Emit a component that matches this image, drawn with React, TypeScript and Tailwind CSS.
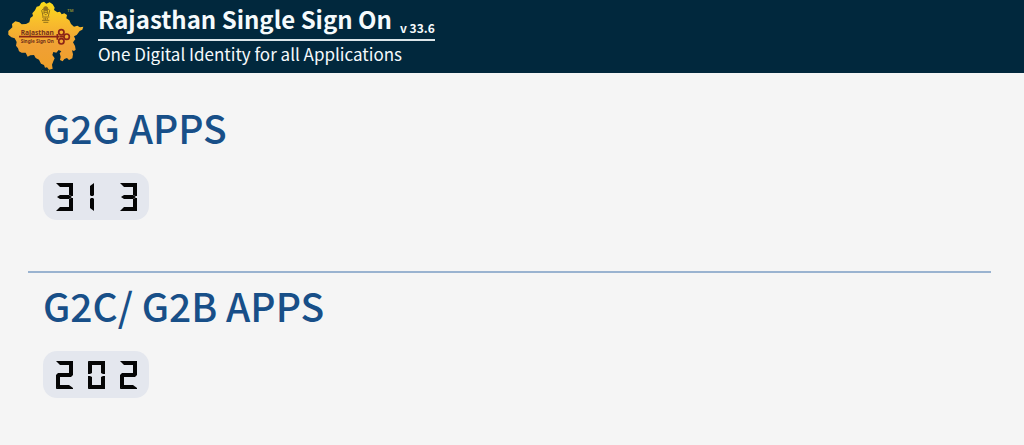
import React from "react";

const SEGMENTS: Record<string, string> = {
	a: "0,0 17,0 17,1 13,4 4,4",
	b: "17,0 17,13 15,13 13,12 13,3",
	c: "13,16 15,15 17,15 17,28 13,25",
	d: "4,24 13,24 17,27 17,28 0,28",
	e: "0,15 2,15 4,16 4,25 0,28",
	f: "0,0 4,3 4,12 2,13 0,13",
	g: "1,14 4,12 13,12 16,14 13,16 4,16",
	h: "2,3 6,0 6,12 5,13 3,13 2,12",
	i: "3,15 5,15 6,16 6,28 2,25 2,16",
	j: "13,11 17,11 17,14 15,16 13,16",
	k: "0,17 0,14 2,12 4,12 4,17",
};

const DIGITS: Record<string, string> = {
	"0": "abcdef",
	"1": "hi",
	"2": "abgedjk",
	"3": "abgcd",
};

const Counter = ({ value }: { value: string }) => (
	<div
		className="flex h-[47px] w-fit items-center gap-[15px] rounded-[14px] bg-[#e4e7ee] pl-[13px] pr-3"
		role="img"
		aria-label={value}
	>
		{value.split("").map((digit, i) => (
			<svg
				key={i}
				className="h-7 w-[17px]"
				viewBox="0 0 17 28"
				fill="#050505"
				aria-hidden="true"
			>
				{DIGITS[digit].split("").map((name) => (
					<polygon key={name} points={SEGMENTS[name]} />
				))}
			</svg>
		))}
	</div>
);

const Logo = () => (
	<svg
		className="h-[70px] w-[78px] shrink-0"
		viewBox="21 3 234 210"
		role="img"
		aria-label="Rajasthan Single Sign On"
	>
		<defs>
			<linearGradient id="state" x1="0" y1="0" x2="0" y2="1">
				<stop offset="0" stopColor="#f8dc18" />
				<stop offset="0.3" stopColor="#f8bd2c" />
				<stop offset="0.65" stopColor="#f0a034" />
				<stop offset="1" stopColor="#efa02a" />
			</linearGradient>
		</defs>
		<path
			fill="url(#state)"
			d="M124 8L132 5L139 11L149 7L158 13L164 23L162 30L172 37L180 35L185 43L193 40L201 45L199 55L208 61L213 72L222 80L232 77L240 82L250 80L247 89L239 93L230 105L222 109L226 118L219 127L225 138L227 149L222 153L216 151L219 163L217 175L207 180L201 174L193 177L188 184L180 180L182 170L179 160L184 154L176 150L169 158L160 156L157 165L164 175L160 184L156 194L158 206L147 209L141 202L135 203L132 195L123 191L117 179L107 174L102 165L91 166L83 170L77 158L65 158L57 154L54 145L48 137L50 126L44 115L34 112L25 104L25 93L37 82L36 72L46 64L58 67L65 73L78 72L88 67L91 54L99 48L97 40L105 31L110 20L118 18Z"
		/>
		<g fill="none" stroke="#92711b" strokeWidth="3">
			<path d="M129 27Q122 31 127 39L129 49M145 27Q152 31 147 39L145 49M132 26V42M142 26V42M126 51H148M126 61H148M132 54V59M137 53V60M142 54V59" />
			<circle cx="137" cy="26" r="6" fill="#92711b" />
			<path d="M132 37H142M134 44H140M130 67H145" />
		</g>
		<g fill="none" stroke="#8b2417" strokeWidth="5">
			<path d="M57 110H177" />
			<circle cx="184" cy="97" r="8" />
			<circle cx="200" cy="110" r="8" />
			<circle cx="184" cy="124" r="8" />
			<path d="M172 102V119M178 110H192" />
		</g>
		<text
			x="62"
			y="104"
			fill="#74301b"
			className="font-['Noto_Sans',sans-serif] text-[20px] font-bold"
		>
			Rajasthan
		</text>
		<text
			x="62"
			y="128"
			fill="#74301b"
			className="font-['Noto_Sans',sans-serif] text-[14px] font-bold"
		>
			Single Sign On
		</text>
		<text
			x="202"
			y="37"
			fill="#8c8b32"
			className="font-['Noto_Sans',sans-serif] text-[12px] font-bold"
		>
			TM
		</text>
	</svg>
);

const Header = () => (
	<header className="flex bg-[#01283d] pt-px pb-0.5 pl-[7px] text-[#f5fafc]">
		<Logo />
		<div className="ml-[13px]">
			<div className="flex items-end gap-2 border-b-2 border-[#dce5e9] pb-0.5">
				<h1 className="text-[24px] leading-9 font-bold">
					Rajasthan Single Sign On
				</h1>
				<span className="text-[12px] leading-[18px] font-bold">v 33.6</span>
			</div>
			<p className="text-[17px] leading-[26px]">
				One Digital Identity for all Applications
			</p>
		</div>
	</header>
);

const AppGroup = ({ title, count }: { title: string; count: string }) => (
	<section className="px-[15px]">
		<h2 className="mb-4 text-[39px] leading-[60px] font-medium text-[#184f88]">
			{title}
		</h2>
		<Counter value={count} />
	</section>
);

const App = () => {
	return (
		<div className="min-h-screen bg-[#f5f5f5] font-['Noto_Sans_CJK_SC',sans-serif]">
			<Header />
			<main className="mr-[33px] ml-7 pt-6">
				<AppGroup title="G2G APPS" count="313" />
				<hr className="mt-[51px] mb-0.5 border-t-2 border-[#9ab3d0]" />
				<AppGroup title="G2C/ G2B APPS" count="202" />
			</main>
		</div>
	);
};

export default App;
